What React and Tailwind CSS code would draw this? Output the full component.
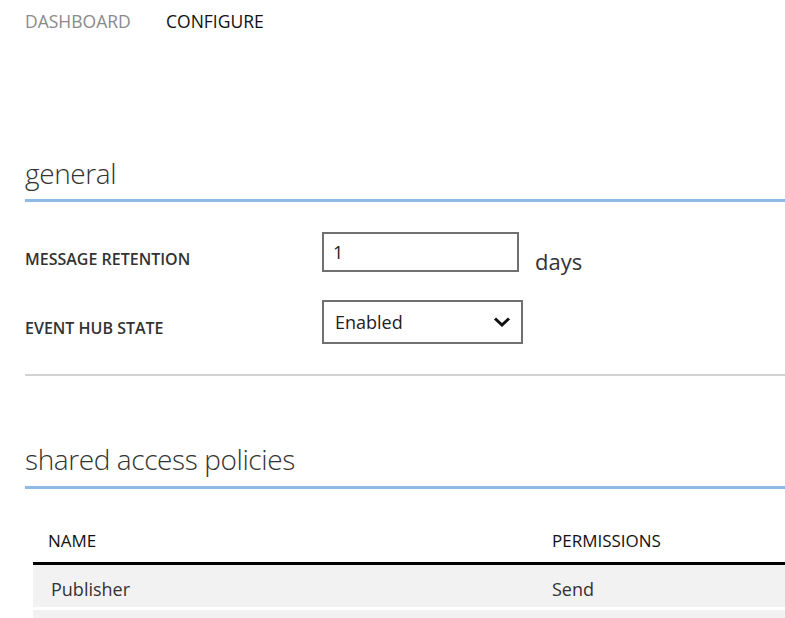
export default function App() {
  const font = { fontFamily: '"Open Sans", "Noto Sans", sans-serif' };
  return (
    <div className="w-[785px] h-[618px] overflow-hidden bg-white" style={font}>
      {/* tabs */}
      <div className="flex pl-[25px] pt-[9px] text-[17.5px] leading-[24px]">
        <span className="text-[#8a8a8a] w-[141px]">DASHBOARD</span>
        <span className="text-[#111]">CONFIGURE</span>
      </div>

      {/* general */}
      <div className="ml-[25px] mt-[122px]">
        <h2 className="text-[28px] leading-[36px] font-light text-[#333] tracking-[-0.4px]">general</h2>
        <div className="mt-[8px] h-[3px] bg-[#8ebbe4]" />
      </div>

      <div className="ml-[25px] mt-[30px]">
        <div className="flex items-center h-[40px]">
          <div className="w-[297px] text-[16px] font-semibold text-[#333] pt-[14px]">MESSAGE RETENTION</div>
          <div className="w-[197px] h-[40px] border-2 border-[#707070] flex items-center px-[9px] text-[18px] text-[#222]">1</div>
          <span className="ml-[16px] pt-[19px] text-[22px] text-[#333]">days</span>
        </div>
        <div className="flex items-center h-[44px] mt-[28px]">
          <div className="w-[297px] text-[16px] font-semibold text-[#333] pt-[12px]">EVENT HUB STATE</div>
          <div className="w-[201px] h-[44px] border-2 border-[#707070] flex items-center justify-between pl-[11px] pr-[10px] text-[18px] text-[#222]">
            <span>Enabled</span>
            <svg width="18" height="12" viewBox="0 0 18 12">
              <path d="M2 2.5 L9 9 L16 2.5" fill="none" stroke="#111" strokeWidth="3" />
            </svg>
          </div>
        </div>
      </div>

      <div className="ml-[25px] mt-[30px] h-[2px] bg-[#d2d2d2]" />

      {/* shared access policies */}
      <div className="ml-[25px] mt-[65px]">
        <h2 className="text-[28px] leading-[36px] font-light text-[#333] tracking-[-0.4px]">shared access policies</h2>
        <div className="mt-[9px] h-[3px] bg-[#8ebbe4]" />
      </div>

      <div className="ml-[33px] mt-[40px]">
        <div className="flex h-[33px] text-[17px] leading-[24px] text-[#111]">
          <div className="w-[519px] pl-[15px]">NAME</div>
          <div>PERMISSIONS</div>
        </div>
        <div className="h-[3px] bg-black" />
        <div className="flex h-[42px] items-center pt-[7px] bg-[#f2f2f2] text-[18px] text-[#333]">
          <div className="w-[519px] pl-[18px]">Publisher</div>
          <div>Send</div>
        </div>
        <div className="mt-[3px] h-[42px] bg-[#f2f2f2]" />
      </div>
    </div>
  );
}
